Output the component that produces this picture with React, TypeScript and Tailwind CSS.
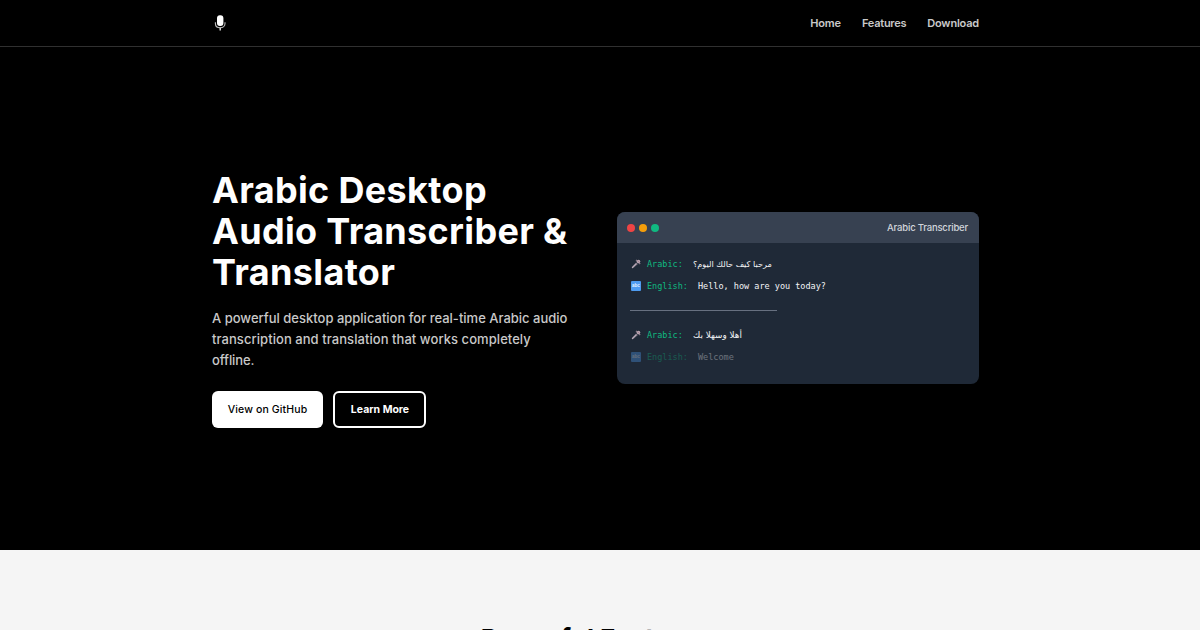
function Microphone() {
  return (
    <svg className="h-4 w-3" viewBox="0 0 12 16" fill="none">
      <rect x="3" y="0.2" width="6.4" height="10.8" rx="2.9" fill="#fff" />
      <path d="M1.4 7.2v1.2c0 2.6 2 4.3 4.8 4.3s4.8-1.7 4.8-4.3V7.2" stroke="#bdbdbd" strokeWidth="1.1" />
      <path d="M6.2 12.7v2.8" stroke="#e5e5e5" strokeWidth="1.4" />
    </svg>
  );
}

function HandMic() {
  return (
    <svg className="h-[10px] w-[10px] shrink-0" viewBox="0 0 10 10">
      <path d="M0.6 8.3 5.2 3.4 6.8 5 1.7 9.5Z" fill="#8f8593" />
      <path d="M1 8.8 4.9 5" stroke="#c6b5c4" strokeWidth="0.9" />
      <path d="M5 0.9 9.2 5" stroke="#8a7d8d" strokeWidth="1.3" />
      <circle cx="7.5" cy="2.5" r="1.8" fill="#b9a3b0" />
      <path d="M6.5 1.5 8.5 3.5" stroke="#94788a" strokeWidth="0.7" />
    </svg>
  );
}

function LatinLetters() {
  return (
    <span className="flex h-[10px] w-[10px] shrink-0 items-center justify-center rounded-[1px] bg-[#4e9bf0] font-['Liberation_Sans'] text-[4.5px] font-bold leading-none text-[#e4f1ff]">
      abc
    </span>
  );
}

const navLinks = [
  { label: "Home", style: "tracking-[-0.15px]" },
  { label: "Features", style: "tracking-[-0.25px]" },
  { label: "Download", style: "tracking-[-0.2px]" },
];

const labelStyle = "ml-[6px] w-[46px] shrink-0 text-[#10b981]";

export default function App() {
  return (
    <div className="h-[630px] overflow-hidden bg-black font-[Inter,sans-serif] text-white">
      <header className="h-[47px] border-b border-[#303030] pr-[9px]">
        <div className="mx-auto flex h-[46px] w-[767px] items-center justify-between pl-0.5">
          <Microphone />
          <nav className="flex gap-[21px] text-[11px] font-semibold text-[#c9c9c9]">
            {navLinks.map((link) => (
              <a key={link.label} href="#" className={link.style}>
                {link.label}
              </a>
            ))}
          </nav>
        </div>
      </header>

      <section className="h-[503px] pr-[9px]">
        <div className="mx-auto flex w-[767px] items-start justify-between">
          <div className="w-[370px] pt-[123px]">
            <h1 className="whitespace-nowrap text-[36px] font-bold leading-[41px]">
              <span className="block tracking-[0.34px]">Arabic Desktop</span>
              <span className="block tracking-[0.33px]">Audio Transcriber &amp;</span>
              <span className="block tracking-[0.34px]">Translator</span>
            </h1>
            <p className="mt-[15px] whitespace-nowrap text-[13px] font-medium leading-[21px] text-[#c9c9c9]">
              <span className="block">A powerful desktop application for real-time Arabic audio</span>
              <span className="block tracking-[0.06px]">transcription and translation that works completely</span>
              <span className="block tracking-[-0.1px]">offline.</span>
            </p>
            <div className="mt-5 flex gap-[10px] text-[10.5px]">
              <a
                href="#"
                className="flex h-[37px] w-[111px] items-center justify-center rounded-md bg-white font-medium tracking-[0.14px] text-black"
              >
                View on GitHub
              </a>
              <a
                href="#"
                className="flex h-[37px] w-[93px] items-center justify-center rounded-md border-2 border-white pl-px font-bold"
              >
                Learn More
              </a>
            </div>
          </div>

          <div className="mt-[165px] h-[172px] w-[362px] overflow-hidden rounded-lg bg-[#1f2937]">
            <div className="flex h-[31px] items-center justify-between bg-[#374151] pl-[10px] pr-[11px]">
              <div className="flex gap-1">
                <span className="h-2 w-2 rounded-full bg-[#ef4444]" />
                <span className="h-2 w-2 rounded-full bg-[#f59e0b]" />
                <span className="h-2 w-2 rounded-full bg-[#10b981]" />
              </div>
              <span className="pt-px text-[9.5px] font-medium tracking-[-0.19px] text-[#d1d5db]">
                Arabic Transcriber
              </span>
            </div>
            <div className="flex flex-col pl-[13px] pt-[10px] font-['DejaVu_Sans_Mono',monospace] text-[8.5px] leading-[22px] text-[#f3f4f6]">
              <div className="flex h-[22px] items-center pl-px">
                <HandMic />
                <span className={labelStyle}>Arabic:</span>
                <span dir="rtl" className="whitespace-nowrap font-['DejaVu_Sans',sans-serif] text-[8.15px]">
                  مرحبا كيف حالك اليوم؟
                </span>
              </div>
              <div className="flex h-[22px] items-center pl-px">
                <LatinLetters />
                <span className={labelStyle}>English:</span>
                <span className="ml-[5px]">Hello, how are you today?</span>
              </div>
              <div className="mt-[13px] h-px w-[147px] bg-[#677080]" />
              <div className="mt-[13px] flex h-[22px] items-center pl-px">
                <HandMic />
                <span className={labelStyle}>Arabic:</span>
                <span dir="rtl" className="whitespace-nowrap font-['DejaVu_Sans',sans-serif] text-[8.85px]">
                  أهلا وسهلا بك
                </span>
              </div>
              <div className="flex h-[22px] items-center pl-px opacity-35">
                <LatinLetters />
                <span className={labelStyle}>English:</span>
                <span className="ml-[5px]">Welcome</span>
              </div>
            </div>
          </div>
        </div>
      </section>

      <section className="h-[120px] bg-[#f5f5f5] pr-[9px] pt-[72px] text-center text-black">
        <h2 className="whitespace-nowrap text-[26px] font-bold leading-[34px] tracking-[-0.1px]">Powerful Features</h2>
      </section>
    </div>
  );
}
